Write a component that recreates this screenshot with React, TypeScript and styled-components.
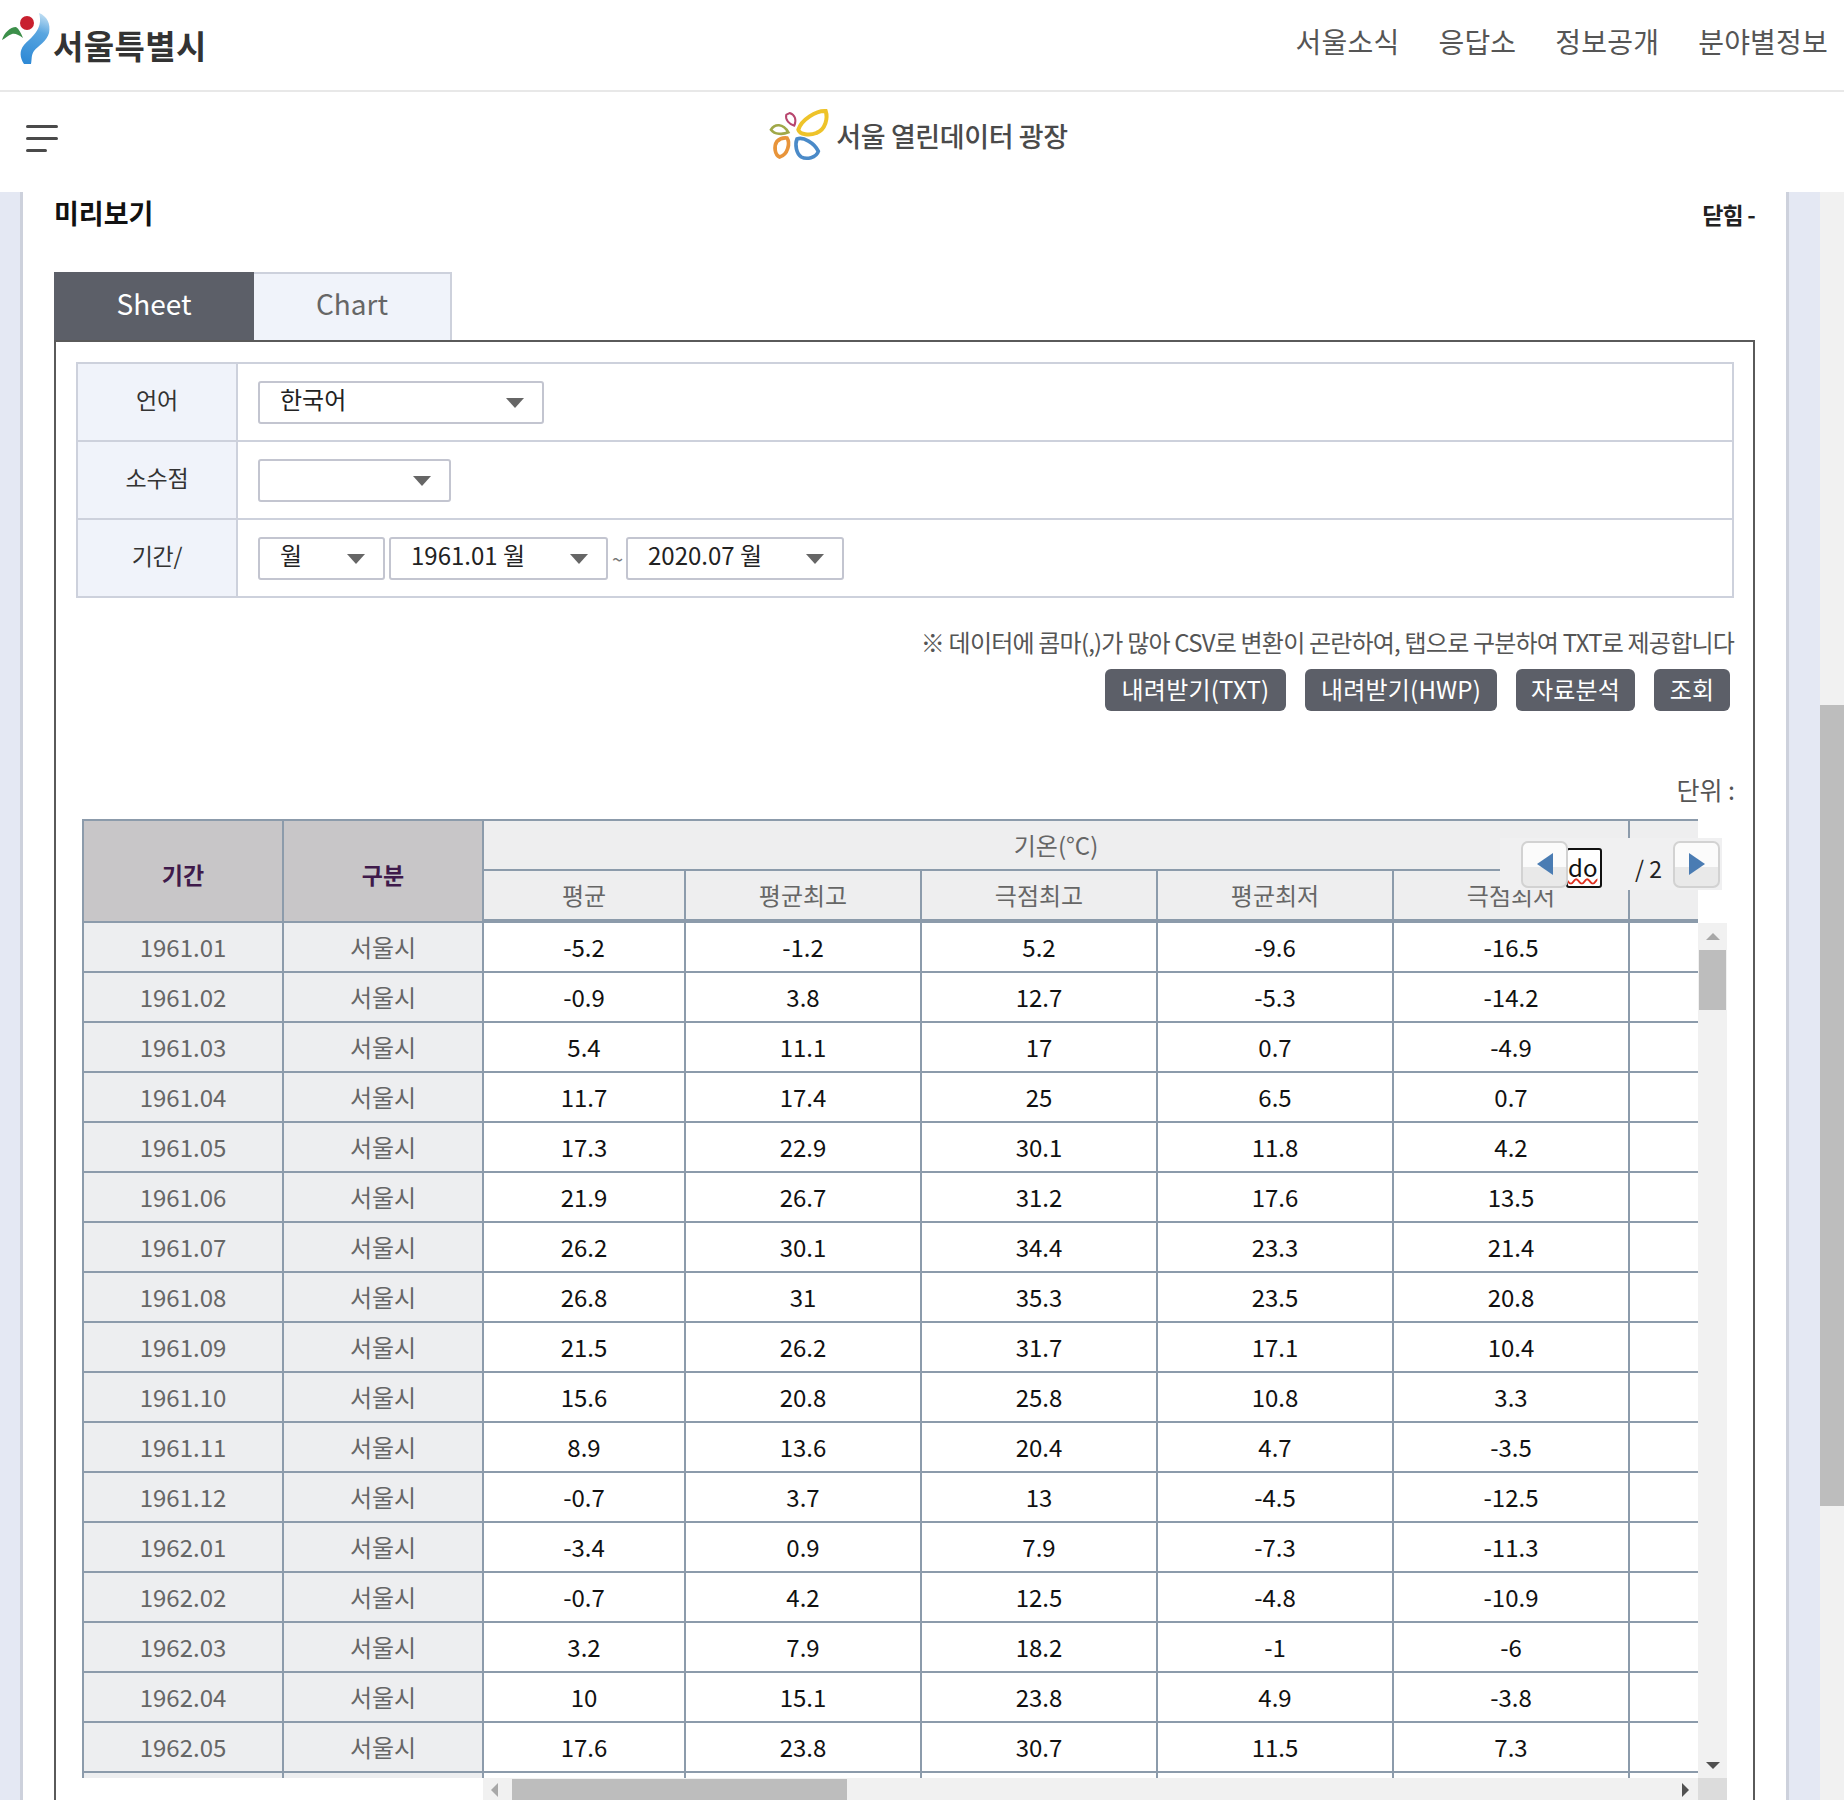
import React, { FC } from 'react';
import styled, { createGlobalStyle } from 'styled-components';

const GlobalStyle = createGlobalStyle`
	* {
		box-sizing: border-box;
	}
	html,
	body {
		margin: 0;
		padding: 0;
		background: #fff;
		font-family: 'Noto Sans CJK KR', 'Noto Sans', sans-serif;
	}
`;

const Page = styled.div`
	width: 1844px;
	height: 1800px;
	overflow: hidden;
	display: flex;
	flex-direction: column;
`;

const TopBar = styled.header`
	height: 92px;
	flex: none;
	display: flex;
	justify-content: space-between;
	border-bottom: 2px solid #e8e8e8;
	padding-right: 16px;
`;

const CityLogo = styled.div`
	display: flex;
	align-items: flex-end;
	height: 64px;
	padding-top: 10px;
	svg {
		flex: none;
		margin-right: -2px;
	}
`;

const CityName = styled.span`
	font-size: 33px;
	font-weight: 700;
	color: #333;
	letter-spacing: 0.4px;
	line-height: 36px;
	margin-bottom: 1px;
`;

const Nav = styled.nav`
	display: flex;
	gap: 39px;
	padding-top: 21px;
`;

const NavLink = styled.a`
	font-size: 28px;
	line-height: 40px;
	color: #555;
	letter-spacing: 0.2px;
`;

const SubBar = styled.div`
	height: 100px;
	flex: none;
	display: grid;
	grid-template-columns: 1fr auto 1fr;
	align-items: center;
	padding: 0 34px 0 26px;
`;

const Burger = styled.div`
	display: flex;
	flex-direction: column;
	gap: 9px;
	align-items: flex-start;
	margin-top: -7px;
`;

const BurgerLine = styled.span<{ $w: number }>`
	display: block;
	height: 3px;
	border-radius: 2px;
	background: #4a4a4a;
	width: ${(p) => p.$w}px;
`;

const OpenLogo = styled.div`
	display: flex;
	align-items: center;
	gap: 4px;
	margin-top: -14px;
`;

const OpenName = styled.span`
	font-size: 27px;
	font-weight: 500;
	color: #4a4a4a;
	letter-spacing: -0.4px;
`;

const Body = styled.div`
	flex: 1;
	min-height: 0;
	display: flex;
`;

const Strip = styled.div<{ $side: 'left' | 'right'; $w: number }>`
	flex: none;
	width: ${(p) => p.$w}px;
	background: #e4e8f3;
	border-${(p) => (p.$side === 'left' ? 'right' : 'left')}: 3px solid #cdd1dc;
`;

const PageScroll = styled.div`
	flex: none;
	width: 24px;
	background: #f1f1f1;
	padding-top: 513px;
`;

const PageThumb = styled.div`
	height: 801px;
	background: #bdbdbd;
`;

const Panel = styled.main`
	flex: 1;
	min-width: 0;
	padding: 0 31px 0 31px;
`;

const TitleRow = styled.div`
	height: 80px;
	display: flex;
	justify-content: space-between;
	align-items: flex-start;
`;

const Title = styled.h2`
	margin: 0;
	font-size: 27px;
	line-height: 42px;
	font-weight: 700;
	color: #111;
	letter-spacing: 0;
`;

const CloseLink = styled.span`
	font-size: 23px;
	line-height: 44px;
	font-weight: 700;
	color: #222;
	letter-spacing: -0.8px;
`;

const Tabs = styled.div`
	display: flex;
	height: 68px;
`;

const Tab = styled.div<{ $active?: boolean }>`
	display: flex;
	align-items: center;
	justify-content: center;
	width: ${(p) => (p.$active ? 200 : 198)}px;
	padding-bottom: 8px;
	font-size: 28px;
	background: ${(p) => (p.$active ? '#5c5f68' : '#f0f3fa')};
	color: ${(p) => (p.$active ? '#fff' : '#666')};
	border: 2px solid ${(p) => (p.$active ? '#5c5f68' : '#cdd1dc')};
	border-bottom: 0;
	border-left: ${(p) => (p.$active ? undefined : '0')};
`;

const SheetBox = styled.section`
	border: 2px solid #5a5a5a;
	padding: 20px 20px 0 20px;
`;

const FilterTable = styled.div`
	border: 2px solid #cdd1dc;
	border-bottom: 0;
	width: 1658px;
`;

const FilterRow = styled.div`
	display: flex;
	height: 78px;
	border-bottom: 2px solid #cdd1dc;
`;

const FilterLabel = styled.div`
	flex: none;
	width: 160px;
	display: flex;
	align-items: center;
	justify-content: center;
	background: #f0f3fa;
	border-right: 2px solid #cdd1dc;
	font-size: 23px;
	color: #333;
	letter-spacing: -0.2px;
	padding-bottom: 6px;
`;

const FilterValue = styled.div`
	display: flex;
	align-items: center;
	padding-left: 20px;
	gap: 4px;
`;

const SelectBox = styled.div<{ $w: number }>`
	width: ${(p) => p.$w}px;
	height: 43px;
	display: flex;
	align-items: center;
	justify-content: space-between;
	padding: 0 18px 7px 20px;
	border: 2px solid #c3c5d0;
	border-radius: 3px;
	background: #fff;
	font-size: 24px;
	color: #222;
	letter-spacing: 0;
`;

const Caret = styled.span`
	width: 0;
	height: 0;
	margin-top: 8px;
	border-left: 9px solid transparent;
	border-right: 9px solid transparent;
	border-top: 10px solid #666;
`;

const Tilde = styled.span`
	width: 10px;
	font-size: 20px;
	color: #777;
	text-align: center;
`;

const Notice = styled.p`
	margin: 24px 0 0;
	width: 1658px;
	text-align: right;
	font-size: 24px;
	line-height: 40px;
	color: #555;
	letter-spacing: -0.8px;
`;

const ActionRow = styled.div`
	display: flex;
	justify-content: flex-end;
	gap: 19px;
	width: 1654px;
	margin-top: 7px;
`;

const ActionButton = styled.button<{ $w: number }>`
	width: ${(p) => p.$w}px;
	height: 42px;
	padding: 0 0 3px;
	border: 0;
	border-radius: 6px;
	background: #5c5f68;
	color: #fff;
	font-family: inherit;
	font-size: 24px;
	letter-spacing: 0.2px;
`;

const UnitLabel = styled.div`
	width: 1659px;
	margin-top: 58px;
	text-align: right;
	font-size: 25px;
	line-height: 40px;
	color: #555;
`;

const GridArea = styled.div`
	position: relative;
	margin: 10px 0 0 6px;
	display: grid;
	grid-template-columns: 1616px 29px;
	grid-template-rows: 104px 855px 23px;
`;

const TableClip = styled.div`
	grid-column: 1;
	grid-row: 1 / 3;
	overflow: hidden;
	border-top: 2px solid #8c9bab;
	border-left: 2px solid #8c9bab;
`;

const DataTable = styled.table`
	border-collapse: separate;
	border-spacing: 0;
	table-layout: fixed;
	width: 1646px;
`;

const Cell = styled.td`
	height: 50px;
	padding: 0 0 2px;
	text-align: center;
	border-right: 2px solid #8c9bab;
	border-bottom: 2px solid #8c9bab;
	font-size: 24px;
	color: #111;
	background: #fff;
`;

const KeyCell = styled(Cell)`
	background: #edeef0;
	color: #666;
`;

const FrozenHead = styled.th`
	padding: 5px 0 0;
	background: #c8c6c8;
	border-right: 2px solid #8c9bab;
	border-bottom: 2px solid #8c9bab;
	font-size: 23px;
	font-weight: 700;
	color: #3f1a4b;
`;

const ColHead = styled.th<{ $thick?: boolean }>`
	height: ${(p) => (p.$thick ? 52 : 50)}px;
	padding: 0 0 2px;
	background: #eeeeef;
	border-right: 2px solid #8c9bab;
	border-bottom: ${(p) => (p.$thick ? 4 : 2)}px solid #8c9bab;
	font-size: 24px;
	font-weight: 400;
	color: #666;
`;

const Pager = styled.div`
	position: absolute;
	left: 1418px;
	top: 19px;
	width: 222px;
	height: 52px;
	display: flex;
	align-items: center;
	padding: 0 0 0 21px;
	background: #f0f0f1;
`;

const PagerButton = styled.button`
	position: relative;
	z-index: 1;
	flex: none;
	width: 47px;
	height: 47px;
	padding: 0;
	display: flex;
	align-items: center;
	justify-content: center;
	border: 2px solid #d2d2d2;
	border-radius: 7px;
	background: linear-gradient(#fbfbfb 0 55%, #e9e9e9 55% 100%);
`;

const PageInput = styled.span`
	flex: none;
	width: 36px;
	height: 40px;
	margin: 7px 0 0 -2px;
	border: 2px solid #111;
	border-radius: 3px;
	background: #fff;
	font-size: 24px;
	line-height: 33px;
	color: #111;
	text-decoration: underline wavy #e03020 1.5px;
	text-underline-offset: 1px;
`;

const PageCount = styled.span`
	flex: none;
	width: 71px;
	padding-top: 8px;
	text-align: right;
	padding-right: 11px;
	font-size: 23px;
	color: #222;
`;

const VScroll = styled.div`
	grid-column: 2;
	grid-row: 2;
	background: #f1f1f1;
	display: flex;
	flex-direction: column;
	align-items: center;
	padding: 10px 1px 9px;
`;

const VThumb = styled.div`
	width: 100%;
	height: 60px;
	margin-top: 10px;
	background: #bdbdbd;
`;

const VSpacer = styled.div`
	flex: 1;
`;

const Arrow = styled.span<{ $dir: 'up' | 'down' | 'left' | 'right'; $color: string }>`
	flex: none;
	width: 0;
	height: 0;
	${(p) =>
		p.$dir === 'up' || p.$dir === 'down'
			? `border-left: 7px solid transparent; border-right: 7px solid transparent; border-${p.$dir === 'up' ? 'bottom' : 'top'}: 7px solid ${p.$color};`
			: `border-top: 7px solid transparent; border-bottom: 7px solid transparent; border-${p.$dir === 'left' ? 'right' : 'left'}: 7px solid ${p.$color};`}
`;

const HScroll = styled.div`
	grid-column: 1;
	grid-row: 3;
	margin-left: 401px;
	background: #f1f1f1;
	display: flex;
	align-items: center;
	padding: 1px 9px 0 8px;
`;

const HThumb = styled.div`
	width: 335px;
	height: 22px;
	margin-left: 14px;
	background: #bdbdbd;
`;

const Corner = styled.div`
	grid-column: 2;
	grid-row: 3;
	background: #dcdcdc;
`;

const Triangle: FC<{ dir: 'left' | 'right' }> = ({ dir }) => (
	<svg width="18" height="24" viewBox="0 0 18 24">
		<polygon
			points={dir === 'left' ? '17,1 17,23 1,12' : '1,1 1,23 17,12'}
			fill="#4a7cb3"
		/>
	</svg>
);

const SeoulMark = () => (
	<svg width="55" height="54" viewBox="0 10 55 54">
		<defs>
			<linearGradient id="swoosh" x1="0.6" y1="0" x2="0.4" y2="1">
				<stop offset="0" stopColor="#bcdcf2" />
				<stop offset="0.35" stopColor="#5aa6e0" />
				<stop offset="1" stopColor="#2f8ad6" />
			</linearGradient>
		</defs>
		<path
			d="M39 13C47 16 51 24 49 33C47 41 38 46 34 51C31 55 32 60 31 64L24 64C20 58 19 51 24 45C30 38 44 30 39 13Z"
			fill="url(#swoosh)"
		/>
		<circle cx="27" cy="23" r="7" fill="#c8202f" />
		<path
			d="M2 40C4 33 10 27 16 27C19 29 21 33 23 38C19 35 15 33 12 34C8 35 5 39 2 40Z"
			fill="#3c8f4a"
		/>
	</svg>
);

const OpenMark = () => (
	<svg width="64" height="54" viewBox="205 85 192 162" fill="none">
		<path d="M296 150C305 120 350 92 378 94C385 115 378 150 350 160C330 168 300 165 296 150Z" stroke="#eec32a" strokeWidth="12" />
		<path d="M292 178C310 170 345 190 356 215C350 235 320 240 305 232C290 222 285 195 292 178Z" stroke="#4a8ac8" strokeWidth="11" />
		<path d="M262 175C272 190 265 225 240 232C225 225 222 200 232 185C240 177 252 174 262 175Z" stroke="#e8943a" strokeWidth="11" />
		<path d="M214 150C225 132 250 130 266 158C250 165 225 165 214 150Z" stroke="#a0a848" strokeWidth="8" />
		<path d="M270 100C285 105 292 120 284 138C270 135 255 120 260 105Z" stroke="#b8466e" strokeWidth="6" />
	</svg>
);

const columns = ['평균', '평균최고', '극점최고', '평균최저', '극점최저'];

const rows: [string, string, string, string, string, string][] = [
	['1961.01', '-5.2', '-1.2', '5.2', '-9.6', '-16.5'],
	['1961.02', '-0.9', '3.8', '12.7', '-5.3', '-14.2'],
	['1961.03', '5.4', '11.1', '17', '0.7', '-4.9'],
	['1961.04', '11.7', '17.4', '25', '6.5', '0.7'],
	['1961.05', '17.3', '22.9', '30.1', '11.8', '4.2'],
	['1961.06', '21.9', '26.7', '31.2', '17.6', '13.5'],
	['1961.07', '26.2', '30.1', '34.4', '23.3', '21.4'],
	['1961.08', '26.8', '31', '35.3', '23.5', '20.8'],
	['1961.09', '21.5', '26.2', '31.7', '17.1', '10.4'],
	['1961.10', '15.6', '20.8', '25.8', '10.8', '3.3'],
	['1961.11', '8.9', '13.6', '20.4', '4.7', '-3.5'],
	['1961.12', '-0.7', '3.7', '13', '-4.5', '-12.5'],
	['1962.01', '-3.4', '0.9', '7.9', '-7.3', '-11.3'],
	['1962.02', '-0.7', '4.2', '12.5', '-4.8', '-10.9'],
	['1962.03', '3.2', '7.9', '18.2', '-1', '-6'],
	['1962.04', '10', '15.1', '23.8', '4.9', '-3.8'],
	['1962.05', '17.6', '23.8', '30.7', '11.5', '7.3'],
];

const App: FC = () => {
	return (
		<Page>
			<GlobalStyle />
			<TopBar>
				<CityLogo>
					<SeoulMark />
					<CityName>서울특별시</CityName>
				</CityLogo>
				<Nav>
					<NavLink>서울소식</NavLink>
					<NavLink>응답소</NavLink>
					<NavLink>정보공개</NavLink>
					<NavLink>분야별정보</NavLink>
				</Nav>
			</TopBar>
			<SubBar>
				<Burger>
					<BurgerLine $w={32} />
					<BurgerLine $w={32} />
					<BurgerLine $w={21} />
				</Burger>
				<OpenLogo>
					<OpenMark />
					<OpenName>서울 열린데이터 광장</OpenName>
				</OpenLogo>
			</SubBar>
			<Body>
				<Strip $side="left" $w={23} />
				<Panel>
					<TitleRow>
						<Title>미리보기</Title>
						<CloseLink>닫힘 -</CloseLink>
					</TitleRow>
					<Tabs>
						<Tab $active>Sheet</Tab>
						<Tab>Chart</Tab>
					</Tabs>
					<SheetBox>
						<FilterTable>
							<FilterRow>
								<FilterLabel>언어</FilterLabel>
								<FilterValue>
									<SelectBox $w={286}>
										한국어
										<Caret />
									</SelectBox>
								</FilterValue>
							</FilterRow>
							<FilterRow>
								<FilterLabel>소수점</FilterLabel>
								<FilterValue>
									<SelectBox $w={193}>
										<span />
										<Caret />
									</SelectBox>
								</FilterValue>
							</FilterRow>
							<FilterRow>
								<FilterLabel>기간/</FilterLabel>
								<FilterValue>
									<SelectBox $w={127}>
										월
										<Caret />
									</SelectBox>
									<SelectBox $w={219}>
										1961.01 월
										<Caret />
									</SelectBox>
									<Tilde>~</Tilde>
									<SelectBox $w={218}>
										2020.07 월
										<Caret />
									</SelectBox>
								</FilterValue>
							</FilterRow>
						</FilterTable>
						<Notice>
							※ 데이터에 콤마(,)가 많아 CSV로 변환이 곤란하여, 탭으로 구분하여 TXT로 제공합니다
						</Notice>
						<ActionRow>
							<ActionButton $w={181}>내려받기(TXT)</ActionButton>
							<ActionButton $w={192}>내려받기(HWP)</ActionButton>
							<ActionButton $w={119}>자료분석</ActionButton>
							<ActionButton $w={76}>조회</ActionButton>
						</ActionRow>
						<UnitLabel>단위 :</UnitLabel>
						<GridArea>
							<TableClip>
								<DataTable>
									<colgroup>
										<col style={{ width: 200 }} />
										<col style={{ width: 200 }} />
										<col style={{ width: 202 }} />
										<col style={{ width: 236 }} />
										<col style={{ width: 236 }} />
										<col style={{ width: 236 }} />
										<col style={{ width: 236 }} />
										<col style={{ width: 100 }} />
									</colgroup>
									<thead>
										<tr>
											<FrozenHead rowSpan={2}>기간</FrozenHead>
											<FrozenHead rowSpan={2}>구분</FrozenHead>
											<ColHead colSpan={5}>기온(°C)</ColHead>
											<ColHead rowSpan={2} $thick />
										</tr>
										<tr>
											{columns.map((name) => (
												<ColHead key={name} $thick>
													{name}
												</ColHead>
											))}
										</tr>
									</thead>
									<tbody>
										{rows.map(([period, ...values]) => (
											<tr key={period}>
												<KeyCell>{period}</KeyCell>
												<KeyCell>서울시</KeyCell>
												{values.map((value, i) => (
													<Cell key={i}>{value}</Cell>
												))}
												<Cell />
											</tr>
										))}
										<tr>
											<KeyCell />
											<KeyCell />
											<Cell />
											<Cell />
											<Cell />
											<Cell />
											<Cell />
											<Cell />
										</tr>
									</tbody>
								</DataTable>
							</TableClip>
							<Pager>
								<PagerButton>
									<Triangle dir="left" />
								</PagerButton>
								<PageInput>do</PageInput>
								<PageCount>/ 2</PageCount>
								<PagerButton>
									<Triangle dir="right" />
								</PagerButton>
							</Pager>
							<VScroll>
								<Arrow $dir="up" $color="#a8a8a8" />
								<VThumb />
								<VSpacer />
								<Arrow $dir="down" $color="#505050" />
							</VScroll>
							<HScroll>
								<Arrow $dir="left" $color="#a8a8a8" />
								<HThumb />
								<VSpacer />
								<Arrow $dir="right" $color="#505050" />
							</HScroll>
							<Corner />
						</GridArea>
					</SheetBox>
				</Panel>
				<Strip $side="right" $w={34} />
				<PageScroll>
					<PageThumb />
				</PageScroll>
			</Body>
		</Page>
	);
};

export default App;
